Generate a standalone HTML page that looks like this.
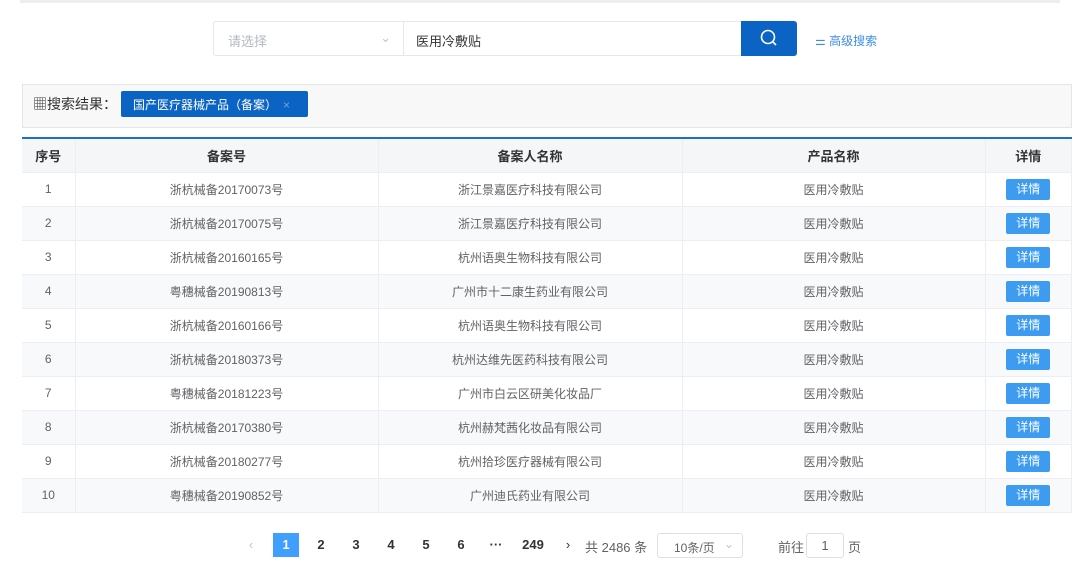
<!DOCTYPE html>
<html><head><meta charset="utf-8"><style>
*{margin:0;padding:0;box-sizing:border-box}
body{width:1080px;height:582px;background:#fff;font-family:"Liberation Sans","Noto Sans CJK SC",sans-serif;font-size:13px;color:#606266;position:relative;overflow:hidden}
.abs{position:absolute;white-space:nowrap}
.topline{left:20px;top:0;width:1040px;height:3px;background:#eee}
.sel{left:213px;top:21px;width:191px;height:35px;border:1px solid #e4e7ed;border-radius:3px 0 0 3px;color:#b4b8c0;padding:9px 14px}
.inp{left:403px;top:21px;width:340px;height:35px;border:1px solid #e4e7ed;color:#333;padding:9px 12px}
.btn{left:741px;top:21px;width:56px;height:35px;background:#0b63c3;border-radius:0 3px 3px 0}
.adv{left:815px;top:32px;color:#3d8de6;font-size:12px}
.res{left:22px;top:84px;width:1050px;height:44px;background:#f8f8f9;border:1px solid #e6e6e6}
.tag{left:121px;top:91px;width:187px;height:26px;background:#0b63c3;color:#fff;font-size:12px;padding:5px 12px;border-radius:2px}
table{position:absolute;left:22px;top:137px;width:1050px;border-collapse:collapse;border-top:2px solid #1a6fd0}
td,th{height:34px;text-align:center;border-right:1px solid #ebeef5;border-bottom:1px solid #ebeef5;font-size:12px}
th{background:#f5f6f8;color:#333;font-weight:bold;font-size:13px}
tr:nth-child(odd) td{background:#f8f9fb}
.d{display:inline-block;background:#3d9cf0;color:#fff;width:44px;height:21px;line-height:21px;border-radius:2px;font-size:12px}
.pg{top:533px;height:24px;line-height:24px;font-weight:bold;color:#333;font-size:13px;text-align:center;width:26px}
</style></head><body>
<div class="abs topline"></div>
<div class="abs sel">请选择<span style="position:absolute;right:12px;top:8px;color:#c0c4cc">⌄</span></div>
<div class="abs inp">医用冷敷贴</div>
<div class="abs btn"><svg width="56" height="35"><circle cx="27" cy="16" r="6.5" fill="none" stroke="#fff" stroke-width="1.6"/><line x1="32" y1="21" x2="35" y2="24" stroke="#fff" stroke-width="1.6"/></svg></div>
<div class="abs adv">⚌ 高级搜索</div>
<div class="abs res"></div>
<div class="abs" style="left:33px;top:94px;font-size:14px;color:#333">▦搜索结果：</div>
<div class="abs tag">国产医疗器械产品（备案）<span style="color:#6fa4dc;margin-left:6px">×</span></div>
<table>
<tr><th style="width:53px">序号</th><th style="width:303px">备案号</th><th style="width:304px">备案人名称</th><th style="width:303px">产品名称</th><th>详情</th></tr>
<tr><td>1</td><td>浙杭械备20170073号</td><td>浙江景嘉医疗科技有限公司</td><td>医用冷敷贴</td><td><span class="d">详情</span></td></tr>
<tr><td>2</td><td>浙杭械备20170075号</td><td>浙江景嘉医疗科技有限公司</td><td>医用冷敷贴</td><td><span class="d">详情</span></td></tr>
<tr><td>3</td><td>浙杭械备20160165号</td><td>杭州语奥生物科技有限公司</td><td>医用冷敷贴</td><td><span class="d">详情</span></td></tr>
<tr><td>4</td><td>粤穗械备20190813号</td><td>广州市十二康生药业有限公司</td><td>医用冷敷贴</td><td><span class="d">详情</span></td></tr>
<tr><td>5</td><td>浙杭械备20160166号</td><td>杭州语奥生物科技有限公司</td><td>医用冷敷贴</td><td><span class="d">详情</span></td></tr>
<tr><td>6</td><td>浙杭械备20180373号</td><td>杭州达维先医药科技有限公司</td><td>医用冷敷贴</td><td><span class="d">详情</span></td></tr>
<tr><td>7</td><td>粤穗械备20181223号</td><td>广州市白云区研美化妆品厂</td><td>医用冷敷贴</td><td><span class="d">详情</span></td></tr>
<tr><td>8</td><td>浙杭械备20170380号</td><td>杭州赫梵茜化妆品有限公司</td><td>医用冷敷贴</td><td><span class="d">详情</span></td></tr>
<tr><td>9</td><td>浙杭械备20180277号</td><td>杭州拾珍医疗器械有限公司</td><td>医用冷敷贴</td><td><span class="d">详情</span></td></tr>
<tr><td>10</td><td>粤穗械备20190852号</td><td>广州迪氏药业有限公司</td><td>医用冷敷贴</td><td><span class="d">详情</span></td></tr>
</table>
<div class="abs pg" style="left:238px;color:#c0c4cc;font-weight:normal">‹</div>
<div class="abs pg" style="left:273px;background:#409eff;color:#fff">1</div>
<div class="abs pg" style="left:308px">2</div>
<div class="abs pg" style="left:343px">3</div>
<div class="abs pg" style="left:378px">4</div>
<div class="abs pg" style="left:413px">5</div>
<div class="abs pg" style="left:448px">6</div>
<div class="abs pg" style="left:483px">···</div>
<div class="abs pg" style="left:516px;width:34px">249</div>
<div class="abs pg" style="left:555px;font-weight:normal">›</div>
<div class="abs" style="left:585px;top:537px;font-size:13px">共 2486 条</div>
<div class="abs" style="left:657px;top:533px;width:86px;height:25px;border:1px solid #dcdfe6;border-radius:3px;font-size:12px;padding:5px 0 0 16px">10条/页<span style="position:absolute;right:8px;top:3px;color:#c0c4cc">⌄</span></div>
<div class="abs" style="left:778px;top:537px;font-size:13px">前往</div>
<div class="abs" style="left:806px;top:533px;width:38px;height:25px;border:1px solid #dcdfe6;border-radius:3px;text-align:center;line-height:23px">1</div>
<div class="abs" style="left:848px;top:537px;font-size:13px">页</div>
</body></html>
